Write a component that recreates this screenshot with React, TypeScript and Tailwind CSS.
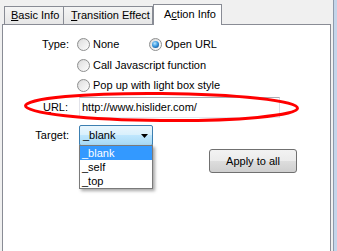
import React from "react";

function Radio({ checked = false }: { checked?: boolean }) {
  return (
    <span className="relative flex h-[13px] w-[13px] shrink-0 items-center justify-center rounded-full border border-[#8e8f8f] bg-[linear-gradient(135deg,#d4d4d4_0%,#f0f0f0_60%,#ffffff_100%)]">
      <span className="h-[9px] w-[9px] rounded-full bg-[linear-gradient(135deg,#e0e0e0,#fafafa)]">
        {checked && (
          <span className="m-[1px] block h-[7px] w-[7px] rounded-full bg-[radial-gradient(circle_at_40%_35%,#b9e6ff_0%,#3c9ae0_45%,#145a9c_80%,#0e3e6e_100%)]" />
        )}
      </span>
    </span>
  );
}

function RadioItem({ checked, label, w }: { checked?: boolean; label: string; w?: string }) {
  return (
    <div className={"flex items-center " + (w ?? "")}>
      <Radio checked={checked} />
      <span className="ml-[3px] whitespace-nowrap">{label}</span>
    </div>
  );
}

export default function App() {
  return (
    <div className="relative flex h-[251px] w-[337px] overflow-hidden bg-[#f0f0f0] font-['Liberation_Sans',Arial,sans-serif] text-[11px] leading-none text-black">
      <div className="flex w-[333px] flex-col pl-[2px] pt-[4px]">
        {/* tab strip */}
        <div className="relative z-10 flex h-[20px] items-end pl-[2px]">
          <div className="flex h-[18px] w-[60px] items-center border border-b-0 border-[#898c95] bg-[linear-gradient(to_bottom,#f5f5f5,#e6e6e6)] pl-[6px] whitespace-nowrap">
            <span>
              <span className="underline">B</span>asic Info
            </span>
          </div>
          <div className="flex h-[18px] w-[89px] items-center border-t border-r border-[#898c95] bg-[linear-gradient(to_bottom,#f5f5f5,#e6e6e6)] pl-[7px] whitespace-nowrap">
            <span>
              <span className="underline">T</span>ransition Effect
            </span>
          </div>
          <div className="-mb-px flex h-[21px] w-[69px] items-center border border-b-0 border-[#898c95] bg-white pl-[10px] pb-[2px] whitespace-nowrap">
            <span>
              A<span className="underline">c</span>tion Info
            </span>
          </div>
        </div>

        {/* panel */}
        <div className="relative h-[240px] w-[329px] shrink-0 border border-[#898c95] bg-white pt-[9px]">
          {/* Type */}
          <div className="flex h-[20px] items-center">
            <div className="w-[66px] text-right">Type:</div>
            <div className="ml-[8px] flex items-center">
              <RadioItem label="None" w="w-[72px]" />
              <RadioItem label="Open URL" checked />
            </div>
          </div>
          <div className="mt-[1px] flex h-[20px] items-center">
            <div className="w-[66px]" />
            <div className="ml-[8px]">
              <RadioItem label="Call Javascript function" />
            </div>
          </div>
          <div className="flex h-[20px] items-center">
            <div className="w-[66px]" />
            <div className="ml-[8px]">
              <RadioItem label="Pop up with light box style" />
            </div>
          </div>

          {/* URL */}
          <div className="mt-[2px] flex h-[21px] items-center">
            <div className="w-[65px] text-right">
              <span className="underline">U</span>RL:
            </div>
            <div className="ml-[11px] flex h-[21px] w-[201px] items-center border border-[#abadb3] border-l-[#e2e3ea] border-r-[#dbdfe6] border-b-[#e3e9ef] pl-[2px] whitespace-nowrap">
              http://www.hislider.com/
            </div>
          </div>

          {/* Target */}
          <div className="mt-[7px] flex h-[21px] items-center">
            <div className="w-[66px] text-right">Target:</div>
            <div className="relative ml-[10px]">
              <div className="flex h-[21px] w-[74px] items-center justify-between rounded-[2px] border border-[#3c7fb1] bg-[linear-gradient(to_bottom,#eaf6fd_0%,#d9f0fc_45%,#bee6fd_50%,#a7d9f5_100%)] pl-[3px] pr-[4px]">
                <span>_blank</span>
                <svg width="7" height="4" viewBox="0 0 7 4">
                  <polygon points="0,0 7,0 3.5,4" fill="#000" />
                </svg>
              </div>
              <div className="absolute left-0 top-[20px] z-20 w-[74px] border border-[#7a7a7a] bg-white shadow-[2px_2px_3px_rgba(0,0,0,0.35)]">
                <div className="h-[14px] bg-[#3399ff] pl-[2px] leading-[14px] text-white">_blank</div>
                <div className="h-[14px] pl-[2px] leading-[14px]">_self</div>
                <div className="h-[14px] pl-[2px] leading-[14px]">_top</div>
              </div>
            </div>
          </div>

          {/* Apply button */}
          <div className="mt-[3px] flex">
            <div className="ml-[206px] flex h-[24px] w-[88px] items-center justify-center rounded-[3px] border border-[#707070] bg-[linear-gradient(to_bottom,#f2f2f2_0%,#ebebeb_50%,#dddddd_51%,#cfcfcf_100%)]">
              Apply to all
            </div>
          </div>
        </div>
      </div>

      {/* window edge */}
      <div className="h-full w-[4px] border-l border-[#8e9aab] bg-[#c4d5ea]" />

      {/* red annotation ellipse */}
      <svg
        className="pointer-events-none absolute left-0 top-0 z-30"
        width="337"
        height="251"
        viewBox="0 0 337 251"
      >
        <ellipse
          cx="161.5"
          cy="107"
          rx="136"
          ry="13.5"
          fill="none"
          stroke="#ff0000"
          strokeWidth="3"
          transform="rotate(0.5 161.5 107)"
        />
      </svg>
    </div>
  );
}
